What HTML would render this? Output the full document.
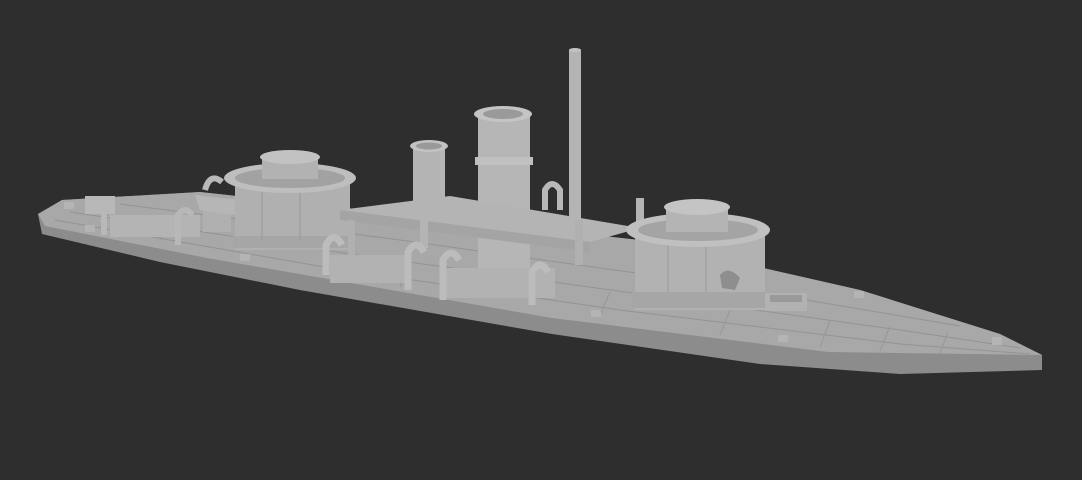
<!DOCTYPE html>
<html><head><style>
html,body{margin:0;padding:0;background:#2e2e2e;width:1082px;height:480px;overflow:hidden}
</style></head><body>
<svg width="1082" height="480" viewBox="0 0 1082 480" xmlns="http://www.w3.org/2000/svg">
<rect width="1082" height="480" fill="#2e2e2e"/>
<!-- hull overall (side) -->
<path d="M38,214 L62,200 L200,192 L640,240 L860,290 L1000,334 L1042,355 L1042,370 L900,374 L760,364 L552,334 L300,290 L160,262 L42,234 Z" fill="#8c8c8c"/>
<!-- deck -->
<path d="M38,214 L62,200 L200,192 L640,240 L860,290 L1000,334 L1042,355 L828,352 L552,318 L207,258 L45,226 Z" fill="#a8a8a8"/>
<!-- plank lines -->
<g stroke="#939393" stroke-width="1" fill="none">
<path d="M55,220 L330,268 L620,310 L900,344 L1030,354"/>
<path d="M70,212 L350,254 L640,294 L900,330 L1020,348"/>
<path d="M120,204 L400,240 L700,282 L960,326"/>
</g>
<g stroke="#969696" stroke-width="1">
<line x1="100" y1="228" x2="110" y2="210"/><line x1="160" y1="240" x2="170" y2="220"/>
<line x1="400" y1="287" x2="410" y2="265"/><line x1="600" y1="315" x2="610" y2="292"/>
<line x1="820" y1="347" x2="830" y2="320"/><line x1="880" y1="351" x2="890" y2="326"/>
<line x1="940" y1="353" x2="948" y2="332"/><line x1="720" y1="335" x2="730" y2="310"/>
</g>
<!-- left boiler boxes -->
<rect x="110" y="215" width="90" height="22" fill="#b4b4b4"/>
<rect x="85" y="196" width="30" height="18" fill="#b8b8b8"/>
<rect x="203" y="210" width="28" height="22" fill="#b0b0b0"/>
<path d="M195,195 L240,200 L235,215 L200,210Z" fill="#b6b6b6"/>
<path d="M178,245 L178,215 Q185,205 192,215" stroke="#b8b8b8" stroke-width="6" fill="none"/>
<path d="M104,235 L104,205" stroke="#b8b8b8" stroke-width="6"/>
<path d="M205,190 Q210,172 222,182" stroke="#b8b8b8" stroke-width="6" fill="none"/>
<!-- left turret -->
<rect x="235" y="180" width="115" height="70" fill="#b0b0b0"/>
<rect x="233" y="236" width="119" height="12" fill="#a6a6a6"/>
<line x1="262" y1="190" x2="262" y2="240" stroke="#999"/>
<line x1="300" y1="190" x2="300" y2="240" stroke="#999"/>
<ellipse cx="290" cy="178" rx="66" ry="15" fill="#bebebe"/>
<ellipse cx="290" cy="178" rx="55" ry="10" fill="#a2a2a2"/>
<rect x="262" y="157" width="56" height="22" fill="#b2b2b2"/>
<ellipse cx="290" cy="157" rx="30" ry="7" fill="#c2c2c2"/>
<!-- funnels -->
<rect x="413" y="146" width="32" height="60" fill="#b4b4b4"/>
<ellipse cx="429" cy="146" rx="19" ry="6" fill="#c2c2c2"/>
<ellipse cx="429" cy="146" rx="13" ry="3.5" fill="#9a9a9a"/>
<rect x="478" y="115" width="52" height="160" fill="#b6b6b6"/>
<rect x="475" y="157" width="58" height="8" fill="#c0c0c0"/>
<ellipse cx="503" cy="114" rx="29" ry="8" fill="#c4c4c4"/>
<ellipse cx="503" cy="114" rx="20" ry="5" fill="#9a9a9a"/>
<rect x="569" y="50" width="12" height="170" fill="#b4b4b4"/>
<ellipse cx="575" cy="50" rx="6" ry="2" fill="#c2c2c2"/>
<path d="M545,210 L545,190 Q552,178 560,190 L560,210" stroke="#b8b8b8" stroke-width="6" fill="none"/>
<!-- platform -->
<path d="M340,210 L450,196 L640,228 L590,242 Z" fill="#b4b4b4"/>
<path d="M340,210 L590,242 L590,252 L340,220 Z" fill="#a4a4a4"/>
<rect x="348" y="220" width="7" height="35" fill="#b0b0b0"/>
<rect x="420" y="198" width="8" height="50" fill="#b4b4b4"/>
<rect x="575" y="220" width="8" height="45" fill="#b0b0b0"/>
<rect x="636" y="198" width="8" height="25" fill="#b4b4b4"/>
<!-- mid boilers -->
<rect x="330" y="255" width="80" height="28" fill="#b2b2b2"/>
<rect x="445" y="268" width="110" height="30" fill="#b2b2b2"/>
<path d="M326,275 L326,245 Q334,230 342,245" stroke="#bcbcbc" stroke-width="7" fill="none"/>
<path d="M408,290 L408,252 Q416,238 424,252" stroke="#bcbcbc" stroke-width="7" fill="none"/>
<path d="M443,300 L443,260 Q451,246 459,260" stroke="#bcbcbc" stroke-width="7" fill="none"/>
<path d="M532,305 L532,272 Q540,258 548,272" stroke="#bcbcbc" stroke-width="7" fill="none"/>
<!-- right turret -->
<rect x="635" y="232" width="130" height="78" fill="#b2b2b2"/>
<rect x="632" y="292" width="136" height="16" fill="#a6a6a6"/>
<line x1="668" y1="245" x2="668" y2="292" stroke="#999"/>
<line x1="706" y1="245" x2="706" y2="292" stroke="#999"/>
<path d="M720,275 Q728,265 740,278 L735,290 L722,288Z" fill="#8e8e8e"/>
<ellipse cx="698" cy="230" rx="72" ry="17" fill="#c0c0c0"/>
<ellipse cx="698" cy="230" rx="60" ry="11" fill="#a4a4a4"/>
<rect x="666" y="208" width="62" height="24" fill="#b4b4b4"/>
<ellipse cx="697" cy="207" rx="33" ry="8" fill="#c4c4c4"/>
<!-- bow box & bitts -->
<rect x="765" y="293" width="42" height="18" fill="#b2b2b2"/>
<rect x="770" y="295" width="32" height="7" fill="#9a9a9a"/>
<rect x="854" y="291" width="10" height="7" fill="#b4b4b4"/>
<rect x="992" y="337" width="10" height="8" fill="#b4b4b4"/>
<rect x="778" y="335" width="10" height="7" fill="#b4b4b4"/>
<rect x="591" y="310" width="10" height="7" fill="#b4b4b4"/>
<rect x="240" y="254" width="10" height="7" fill="#b4b4b4"/>
<rect x="85" y="225" width="10" height="7" fill="#b4b4b4"/>
<rect x="64" y="202" width="10" height="7" fill="#b4b4b4"/>
</svg>
</body></html>
